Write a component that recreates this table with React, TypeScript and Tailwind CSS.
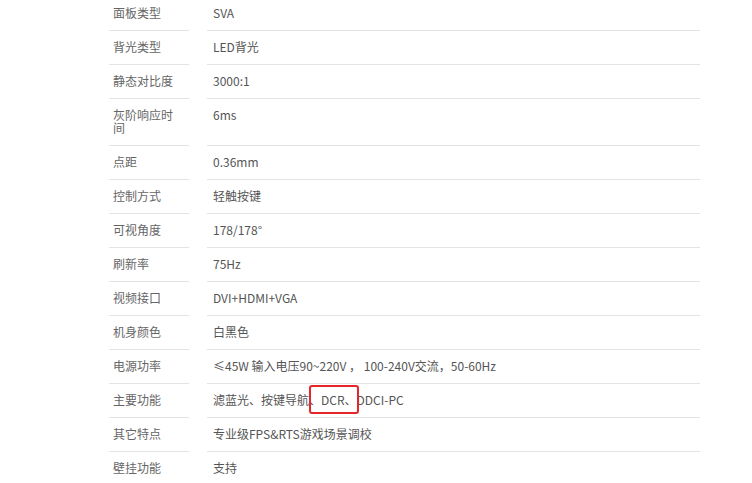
import React from "react";

// 参数表数据
const SPECS: { label: string; value: string; mark?: boolean }[] = [
  { label: "面板类型", value: "SVA" },
  { label: "背光类型", value: "LED背光" },
  { label: "静态对比度", value: "3000:1" },
  { label: "灰阶响应时间", value: "6ms" },
  { label: "点距", value: "0.36mm" },
  { label: "控制方式", value: "轻触按键" },
  { label: "可视角度", value: "178/178°" },
  { label: "刷新率", value: "75Hz" },
  { label: "视频接口", value: "DVI+HDMI+VGA" },
  { label: "机身颜色", value: "白黑色" },
  { label: "电源功率", value: "≤45W 输入电压90~220V ， 100-240V交流，50-60Hz" },
  { label: "主要功能", value: "滤蓝光、按键导航、DCR、DDCI-PC", mark: true },
  { label: "其它特点", value: "专业级FPS&RTS游戏场景调校" },
  { label: "壁挂功能", value: "支持" },
];

export default function App() {
  return (
    <div
      className="w-[752px] h-[483px] overflow-hidden bg-white text-[12px] text-[#666] [text-spacing-trim:space-all]"
      style={{ fontFamily: '"Microsoft YaHei", "Noto Sans CJK SC", "Noto Sans", sans-serif' }}
    >
      <dl className="-mt-[3px] ml-[109px] w-[591px] flex flex-col">
        {SPECS.map((row) => (
          <div key={row.label} className="flex gap-[18px]">
            <dt className="w-[80px] shrink-0 pl-[4px] pr-[12px] pt-[9px] pb-[11px] leading-[13px] border-b border-[#e3e3e3]">
              {row.label}
            </dt>
            <dd className="relative flex-1 pl-[6px] pt-[9px] pb-[11px] leading-[13px] border-b border-[#e3e3e3] text-[#555]">
              {row.value}
              {row.mark && (
                <span className="absolute left-[102px] top-[1px] w-[50px] h-[29px] border-2 border-[#e5262a] rounded-[3px]" />
              )}
            </dd>
          </div>
        ))}
      </dl>
    </div>
  );
}
